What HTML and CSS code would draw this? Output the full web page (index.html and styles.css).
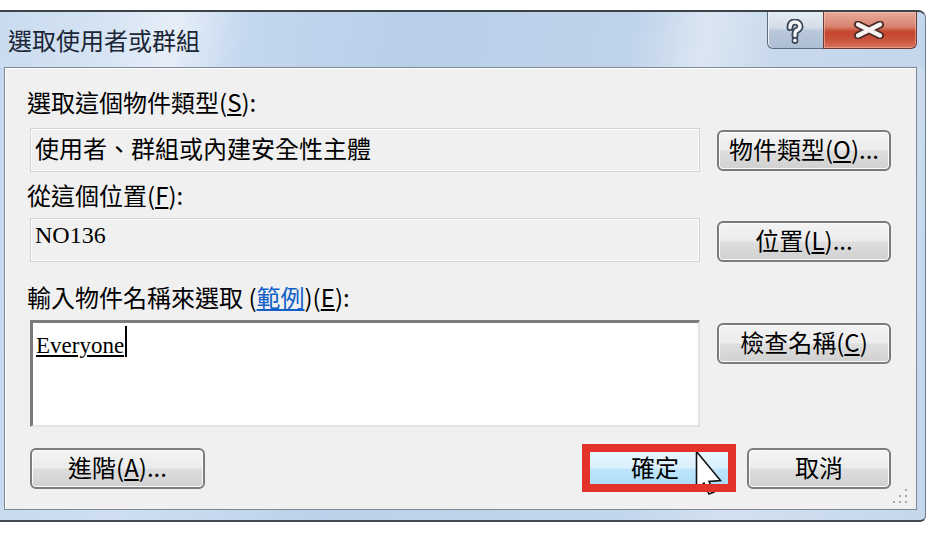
FILE: index.html
```html
<!DOCTYPE html>
<html lang="zh-Hant">
<head>
<meta charset="utf-8">
<title>選取使用者或群組</title>
<link rel="stylesheet" href="styles.css">
</head>
<body>
<div class="window">
  <div class="titlebar">
    <div class="title">選取使用者或群組</div>
    <div class="caps">
      <div class="cap help">
        <svg class="help-glyph" width="20" height="26" viewBox="0 0 20 26">
          <path d="M5 8.5 C5 4 7.5 3 10 3 C13 3 15 5 15 7.5 C15 10 12.5 11 11 12 C10.2 12.6 10 13.5 10 16.5" fill="none" stroke="#3a4756" stroke-width="7" stroke-linecap="round"/>
          <circle cx="10" cy="21.5" r="3.4" fill="#3a4756"/>
          <path d="M5 8.5 C5 4 7.5 3 10 3 C13 3 15 5 15 7.5 C15 10 12.5 11 11 12 C10.2 12.6 10 13.5 10 16.5" fill="none" stroke="#f4f6f8" stroke-width="3.4" stroke-linecap="round"/>
          <circle cx="10" cy="21.5" r="1.8" fill="#f4f6f8"/>
        </svg>
      </div>
      <div class="cap close">
        <svg class="close-glyph" width="32" height="18" viewBox="0 0 32 18">
          <path d="M5 3.5 L27 14.5 M27 3.5 L5 14.5" stroke="#4a2a26" stroke-width="8" stroke-linecap="round"/>
          <path d="M5 3.5 L27 14.5 M27 3.5 L5 14.5" stroke="#f6f2f1" stroke-width="4.4" stroke-linecap="round"/>
        </svg>
      </div>
    </div>
  </div>
  <div class="client">
    <div class="label">選取這個物件類型(<u>S</u>):</div>
    <div class="row r1">
      <div class="field">使用者、群組或內建安全性主體</div>
      <button class="btn">物件類型(<u>O</u>)...</button>
    </div>
    <div class="label l2">從這個位置(<u>F</u>):</div>
    <div class="row r2">
      <div class="field latin">NO136</div>
      <button class="btn">位置(<u>L</u>)...</button>
    </div>
    <div class="label l3">輸入物件名稱來選取 (<a class="link" href="#">範例</a>)(<u>E</u>):</div>
    <div class="row r3">
      <div class="names"><span class="name">Everyone</span></div>
      <button class="btn">檢查名稱(<u>C</u>)</button>
    </div>
    <div class="bottom">
      <button class="btn adv">進階(<u>A</u>)...</button>
      <div class="ok-wrap">
        <button class="btn ok">確定</button>
        <svg class="cursor" width="28" height="46" viewBox="0 0 28 46">
          <path d="M1.5 1.5 L1.5 40 L9 33 L14 44 L19 42 L14 31.5 L25.5 30.5 Z" fill="#ffffff" stroke="#111" stroke-width="1.6" stroke-linejoin="miter"/>
        </svg>
      </div>
      <button class="btn cancel">取消</button>
    </div>
    <svg class="grip" width="18" height="18" viewBox="0 0 18 18">
      <rect x="13" y="1" width="2" height="2" fill="#a9a9a9"/>
      <rect x="7" y="7" width="2" height="2" fill="#a9a9a9"/>
      <rect x="13" y="7" width="2" height="2" fill="#a9a9a9"/>
      <rect x="1" y="13" width="2" height="2" fill="#a9a9a9"/>
      <rect x="7" y="13" width="2" height="2" fill="#a9a9a9"/>
      <rect x="13" y="13" width="2" height="2" fill="#a9a9a9"/>
    </svg>
  </div>
</div>
</body>
</html>
```

FILE: styles.css
```css
* { box-sizing: border-box; }

body {
  margin: 0;
  padding-top: 10px;
  background: #ffffff;
  font-family: "Noto Sans CJK TC", "Noto Sans CJK SC", sans-serif;
}

.window {
  width: 926px;
  height: 512px;
  border-top: 2px solid #3d434b;
  border-right: 1px solid #6c7b8d;
  border-bottom: 2px solid #414852;
  border-radius: 0 8px 6px 0;
  background: linear-gradient(100deg, #c4d7ed 0%, #cfdff1 20%, #bcd2ea 40%, #c2d6ec 70%, #d3e1f0 80%, #c4d7ec 100%);
  display: flex;
  flex-direction: column;
  overflow: hidden;
}

.titlebar {
  height: 55px;
  display: flex;
  justify-content: space-between;
  align-items: flex-start;
  padding: 0 8px 0 8px;
  background: linear-gradient(100deg, #c9dbef 0%, #d6e4f3 12%, #e6eef8 19%, #c3d7ee 27%, #b9cfe9 45%, #bfd3ea 68%, #dbe6f2 76%, #c8d9ec 84%, #c4d6eb 100%);
}

.title {
  font-size: 24px;
  line-height: 55px;
  color: #1b2636;
}

.caps {
  display: flex;
  height: 37px;
}

.cap {
  height: 37px;
  display: flex;
  align-items: center;
  justify-content: center;
  border: 1px solid #5f6c7d;
  border-top: none;
}

.help {
  width: 56px;
  border-radius: 0 0 0 6px;
  border-right: none;
  background: linear-gradient(#e4ebf3 0%, #d2dce8 45%, #b9c8da 52%, #aebfd4 100%);
  box-shadow: inset 1px 0 0 #eef3f8;
}

.help-glyph { margin-top: 3px; margin-left: -1px; }

.close {
  width: 94px;
  border-radius: 0 0 6px 0;
  background: linear-gradient(#e7a99a 0%, #d98570 40%, #c5462c 55%, #c9503a 75%, #d7735c 100%);
  border-color: #6b3d37;
  box-shadow: inset 0 0 0 1px rgba(255, 210, 200, 0.45);
}

.close-glyph { margin-left: -2px; margin-top: -1px; }

.client {
  position: relative;
  margin: 0 8px 0 4px;
  height: 443px;
  border: 1px solid #7f8995;
  background: #f0f0f0;
  box-shadow: inset 1px 1px 0 #ffffff;
  padding: 20px 25px 0 25px;
  display: flex;
  flex-direction: column;
}

.label {
  height: 28px;
  line-height: 28px;
  margin-left: -3px;
  font-size: 24px;
  color: #000;
  white-space: nowrap;
}

.label u, .btn u { text-underline-offset: 2px; }

.l2 { margin-top: 9px; }
.l3 { margin-top: 21px; }

.link {
  color: #1060c8;
  text-decoration: underline;
}

.row {
  display: flex;
  gap: 17px;
  align-items: flex-start;
}

.r1 { margin-top: 12px; }
.r2 { margin-top: 9px; }
.r3 { margin-top: 9px; }

.field {
  width: 670px;
  height: 44px;
  border: 1px solid #d3d3d3;
  box-shadow: inset 0 0 0 1px #fafafa;
  background: #f0f0f0;
  padding: 0 0 0 4px;
  font-size: 24px;
  line-height: 38px;
  color: #000;
  white-space: nowrap;
}

.latin {
  font-family: "Liberation Serif", serif;
  font-size: 24px;
  line-height: 32px;
}

.btn {
  width: 174px;
  height: 41px;
  margin: 0;
  padding: 0 0 4px 0;
  border: 2px solid #7c7c7c;
  border-radius: 6px;
  background: linear-gradient(#f3f3f3 0%, #ececec 48%, #dedede 52%, #d0d0d0 100%);
  box-shadow: inset 0 0 0 1px #fbfbfb;
  font-family: "Noto Sans CJK TC", "Noto Sans CJK SC", sans-serif;
  font-size: 24px;
  line-height: 31px;
  color: #000;
  white-space: nowrap;
}

.r1 .btn { margin-top: 2px; }
.r2 .btn { margin-top: 3px; }
.r3 .btn { margin-top: 3px; }

.names {
  width: 670px;
  height: 107px;
  background: #ffffff;
  border-style: solid;
  border-width: 3px 2px 2px 3px;
  border-color: #7b7b7b #e4e4e4 #e4e4e4 #7b7b7b;
  padding: 3px 0 0 3px;
}

.name {
  display: inline-block;
  height: 31px;
  line-height: 39px;
  padding-right: 1px;
  border-right: 2px solid #000;
  font-family: "Liberation Serif", serif;
  font-size: 23px;
  color: #000;
  text-decoration: underline;
  text-underline-offset: 2px;
  vertical-align: top;
}

.bottom {
  margin-top: 17px;
  height: 48px;
  display: flex;
  align-items: center;
}

.adv { width: 175px; }

.ok-wrap {
  position: relative;
  margin-left: auto;
  width: 154px;
  height: 48px;
  padding: 4px 5px 3px 5px;
}

.ok-wrap::after {
  content: "";
  position: absolute;
  inset: 0;
  border: 8px solid #e3322a;
}

.ok {
  width: 144px;
  height: 41px;
  border-color: #3c7fb1;
  background: linear-gradient(#eaf6fd 0%, #d9f0fc 48%, #bee6fd 52%, #a9daf6 100%);
  padding-right: 8px;
}

.cursor {
  position: absolute;
  left: 113px;
  top: 6px;
}

.cancel {
  width: 144px;
  margin-left: 11px;
}

.grip {
  position: absolute;
  right: 6px;
  bottom: 3px;
}
```
